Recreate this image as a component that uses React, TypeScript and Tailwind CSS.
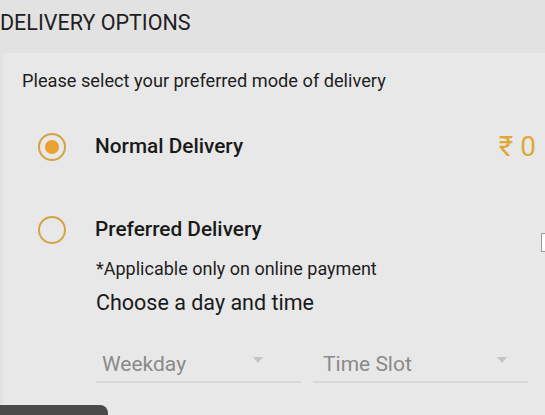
import React from 'react';

const Radio = ({ checked }: { checked: boolean }) => (
  <div className="flex h-[28px] w-[28px] items-center justify-center rounded-full border-[2.5px] border-[#d2a445]">
    {checked && <div className="h-[14px] w-[14px] rounded-full bg-[#e9a132]" />}
  </div>
);

const Dropdown = ({ label, className }: { label: string; className: string }) => (
  <div className={`flex h-[36px] items-center justify-between border-b-2 border-[#d8d8d8] ${className}`}>
    <span className="text-[21px] leading-[24px] text-[#8a8a8a]">{label}</span>
    <svg width="10" height="6" viewBox="0 0 10 6" className="mb-[8px]">
      <path d="M0 0 L10 0 L5 6 Z" fill="#c4c4c4" />
    </svg>
  </div>
);

export default function App() {
  return (
    <div className="relative h-[415px] w-[545px] overflow-hidden bg-[#e2e2e2] font-['Roboto',sans-serif] text-[#1a1a1a]">
      <div className="h-[53px] pt-[10px]">
        <h1 className="text-[21.5px] leading-[25px] text-[#202020]">DELIVERY OPTIONS</h1>
      </div>

      <div className="ml-[3px] h-[362px] bg-[#e8e8e8] pl-[19px]">
        <p className="pt-[18px] text-[18.2px] leading-[20px] text-[#1e1e1e]">
          Please select your preferred mode of delivery
        </p>

        <div className="mt-[36px] flex h-[40px] items-center pr-[9px]">
          <div className="ml-[16px]">
            <Radio checked />
          </div>
          <span className="ml-[29px] text-[20.8px] font-medium text-[#1a1a1a]">Normal Delivery</span>
          <span className="ml-auto text-[28px] leading-[30px] text-[#dfa835]">₹ 0</span>
        </div>

        <div className="mt-[43px] flex h-[40px] items-center">
          <div className="ml-[16px]">
            <Radio checked={false} />
          </div>
          <span className="ml-[29px] text-[20.8px] font-medium text-[#1a1a1a]">Preferred Delivery</span>
        </div>

        <div className="pl-[74px]">
          <p className="mt-[9px] text-[18px] leading-[20px] text-[#1e1e1e]">*Applicable only on online payment</p>
          <p className="mt-[12px] text-[21.5px] leading-[24px] text-[#1a1a1a]">Choose a day and time</p>
          <div className="mt-[32px] flex gap-[12px]">
            <Dropdown label="Weekday" className="w-[205px] pl-[6px] pr-[38px]" />
            <Dropdown label="Time Slot" className="w-[215px] pl-[10px] pr-[21px]" />
          </div>
        </div>
      </div>

      <div className="absolute right-0 top-[233px] h-[19px] w-[4px] border border-r-0 border-[#9a9a9a] bg-white" />
      <div className="absolute bottom-0 left-0 h-[10px] w-[108px] rounded-tr-[8px] bg-[#4a4a4a]" />
    </div>
  );
}
